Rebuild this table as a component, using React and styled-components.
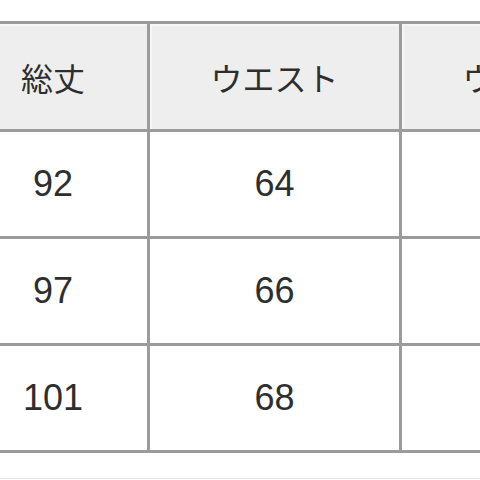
import React from "react";
import styled, { createGlobalStyle } from "styled-components";

const GlobalStyle = createGlobalStyle`
  html, body {
    margin: 0;
    padding: 0;
    background: #fff;
  }
  body {
    font-family: "Liberation Sans", "Noto Sans CJK JP", sans-serif;
    color: #333;
  }
`;

const Viewport = styled.div`
  width: 480px;
  height: 480px;
  overflow: hidden;
  padding-top: 21px;
  box-sizing: border-box;
  display: flex;
  flex-direction: column;
`;

const Table = styled.div`
  display: grid;
  grid-template-columns: 191px 252px 252px;
  grid-auto-rows: 107px;
  grid-template-rows: 108px;
  margin-left: -41px;
  border-top: 3px solid #9b9b9b;
  width: max-content;
`;

const Cell = styled.div`
  box-sizing: border-box;
  display: flex;
  align-items: center;
  justify-content: center;
  border-right: 3px solid #9b9b9b;
  border-bottom: 3px solid #9b9b9b;
  background: ${(p) => (p.$head ? "#eeeeee" : "#ffffff")};
  box-shadow: ${(p) => (p.$head ? "inset 2px 2px 0 #f6f6f6" : "none")};
  font-size: ${(p) => (p.$head ? "32px" : "36px")};
  color: #2e2e2e;
  white-space: nowrap;
`;

const Footer = styled.div`
  margin-top: auto;
  border-top: 1px solid #e4e4e4;
  height: 1px;
`;

const head = ["総丈", "ウエスト", "ウエスト"];
const rows = [
  ["92", "64", "76"],
  ["97", "66", "78"],
  ["101", "68", "80"],
];

export default function App() {
  return (
    <Viewport>
      <GlobalStyle />
      <Table>
        {head.map((h, i) => (
          <Cell $head key={"h" + i}>
            {h}
          </Cell>
        ))}
        {rows.map((r, ri) =>
          r.map((v, ci) => <Cell key={ri + "-" + ci}>{v}</Cell>)
        )}
      </Table>
      <Footer />
    </Viewport>
  );
}
